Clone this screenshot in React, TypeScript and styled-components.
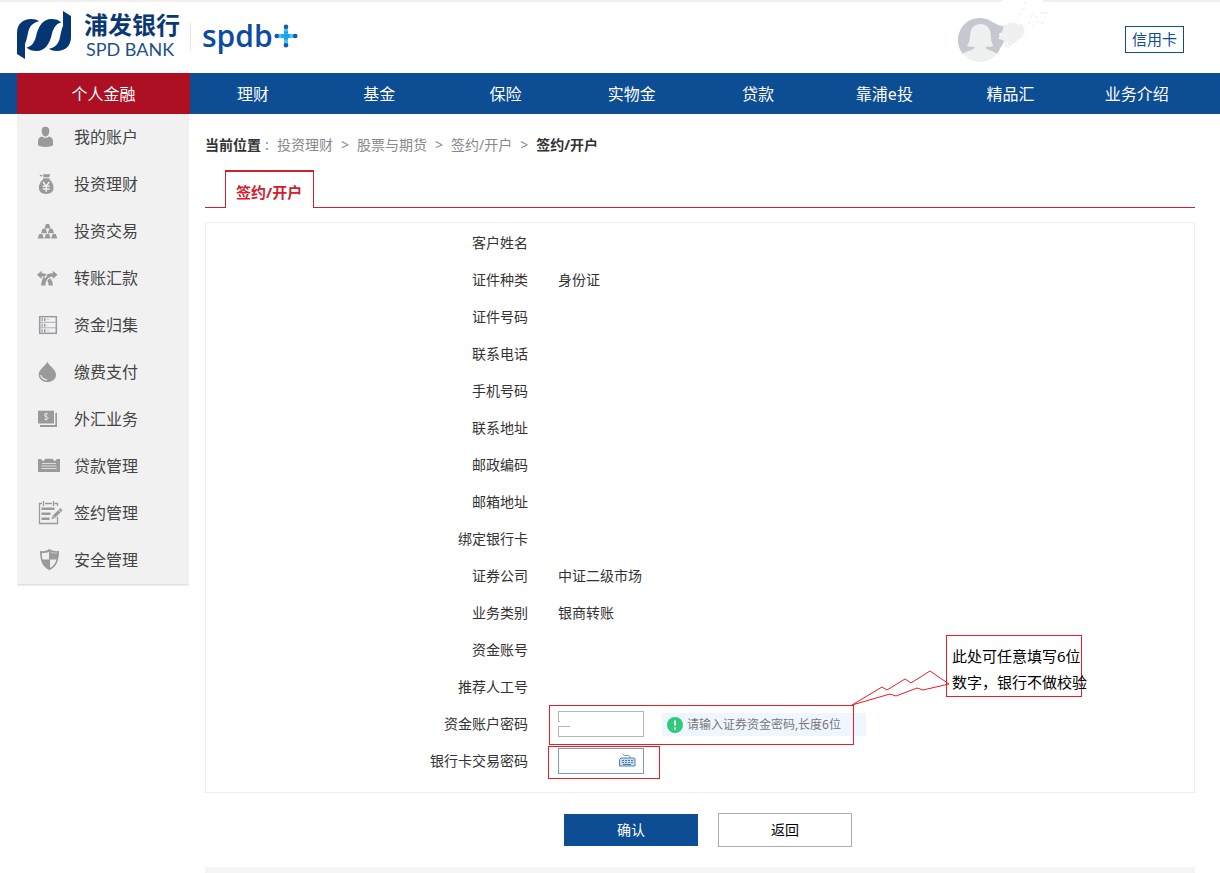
import React from "react";
import styled, { createGlobalStyle, css } from "styled-components";

const blue = "#0d4d94";
const red = "#d0202f";
const mark = "#ed1c24";
const iconGray = "#999b9b";

const GlobalStyle = createGlobalStyle`
  * { box-sizing: border-box; }
  body {
    margin: 0;
    background: #fff;
    color: #333;
    font: 14px/20px "Noto Sans", "Noto Sans CJK SC", sans-serif;
  }
  a { color: inherit; text-decoration: none; }
  svg { display: block; flex: none; }
`;

const Header = styled.header`
  display: flex;
  align-items: flex-start;
  height: 73px;
  padding: 0 36px 0 16px;
  border-top: 2px solid #f0f0f0;
`;

const Brand = styled.a`
  display: flex;
  align-items: center;
  padding-top: 9px;
  color: #0a3874;
`;

const BrandName = styled.span`
  display: flex;
  flex-direction: column;
  padding: 0 10px 0 12px;
`;

const BrandChinese = styled.span`
  font-size: 24px;
  line-height: 26px;
  font-weight: 700;
`;

const BrandLatin = styled.span`
  padding-left: 2px;
  font: 18px/22px Lato, sans-serif;
  color: #1f4f8c;
  white-space: nowrap;
`;

const SubBrand = styled.span`
  display: flex;
  align-items: center;
  gap: 1px;
  height: 29px;
  padding-left: 11px;
  border-left: 1px solid #e6e6e6;
  color: #0d4ca3;
  font: 600 30px/28px "Open Sans", sans-serif;
`;

const Tools = styled.div`
  display: flex;
  align-items: flex-start;
  gap: 75px;
  margin-left: auto;
  margin-top: -2px;
`;

const CardLink = styled.a`
  margin-top: 26px;
  padding: 0 6px;
  border: 1px solid ${blue};
  color: ${blue};
  font-size: 15px;
  line-height: 25px;
`;

const Nav = styled.nav`
  display: flex;
  height: 41px;
  padding: 0 20px 0 17px;
  background: ${blue};
`;

const NavLink = styled.a<{ $active?: boolean }>`
  flex: 1;
  padding-top: 2px;
  color: #fff;
  font-size: 16px;
  line-height: 39px;
  text-align: center;
  ${(p) =>
    p.$active &&
    css`
      flex: 0 0 173px;
      background: #ad1023;
    `}
`;

const Body = styled.div`
  display: flex;
  align-items: flex-start;
  gap: 16px;
  padding: 0 25px 0 17px;
`;

const Sidebar = styled.nav`
  flex: 0 0 172px;
  background: #f1f1f1;
  box-shadow: 0 1px 2px #d0d0d0;
  clip-path: inset(0 0 -4px 0);
`;

const SideLink = styled.a`
  display: flex;
  align-items: center;
  gap: 10px;
  height: 47px;
  padding: 0 0 2px 19px;
  color: #444;
  font-size: 16px;
`;

const Main = styled.main`
  flex: 1;
  min-width: 0;
`;

const Breadcrumb = styled.nav`
  display: flex;
  gap: 8px;
  padding-top: 21px;
  color: #888;
`;

const Place = styled.strong`
  color: #333;
`;

const Colon = styled.span`
  width: 4px;
  margin-left: -4px;
`;

const Tabs = styled.div`
  display: flex;
  height: 38px;
  margin-top: 15px;
  padding-left: 20px;
  border-bottom: 1px solid ${red};
`;

const Tab = styled.button`
  height: 38px;
  padding: 4px 11px 0 10px;
  border: 1px solid ${red};
  border-top-width: 2px;
  border-bottom: 0;
  background: #fff;
  color: ${red};
  font: inherit;
  font-size: 15px;
  font-weight: 700;
`;

const Panel = styled.div`
  margin-top: 14px;
  padding: 1px 0 13px;
  border: 1px solid #eee;
`;

const Row = styled.div`
  display: grid;
  grid-template-columns: 34% 1fr;
  align-items: center;
  height: 37px;
`;

const RowLabel = styled.label`
  padding-right: 14px;
  text-align: right;
  white-space: nowrap;
`;

const RowValue = styled.div`
  position: relative;
  display: flex;
  align-items: center;
  gap: 18px;
  height: 37px;
  margin-left: 16px;
`;

const PasswordInput = styled.input<{ $keyboard?: boolean }>`
  width: 86px;
  height: 26px;
  padding: 2px 4px;
  border: 1px solid ${(p) => (p.$keyboard ? "#8299b9" : "#b5b5b5")};
  background: #fff;
`;

const KeyboardIcon = styled.svg`
  position: absolute;
  left: 61px;
  top: 11px;
`;

const BorderScrape = styled.svg`
  position: absolute;
  left: 0;
  top: 15px;
`;

const Tip = styled.div`
  display: flex;
  align-items: center;
  gap: 4px;
  width: 204px;
  height: 23px;
  margin-top: 2px;
  padding-left: 5px;
  background: #f0f6ff;
  color: #777;
  font-size: 12px;
  white-space: nowrap;
`;

const Frame = styled.div<{ $x: number; $y: number; $w: number; $h: number }>`
  position: absolute;
  left: ${(p) => p.$x}px;
  top: ${(p) => p.$y}px;
  width: ${(p) => p.$w}px;
  height: ${(p) => p.$h}px;
  border: 1px solid ${mark};
  pointer-events: none;
`;

const Note = styled(Frame)`
  padding: 7px 0 0 5px;
  color: #000;
  font-size: 15px;
  line-height: 26px;
  white-space: nowrap;
`;

const Pointer = styled.svg`
  position: absolute;
  left: 292px;
  top: -36px;
  pointer-events: none;
`;

const Actions = styled.div`
  display: flex;
  justify-content: center;
  align-items: center;
  gap: 20px;
  height: 34px;
  margin: 20px 0;
  padding-left: 16px;
`;

const ActionButton = styled.button<{ $primary?: boolean }>`
  width: 134px;
  height: ${(p) => (p.$primary ? 32 : 34)}px;
  padding: 0;
  border: ${(p) => (p.$primary ? "0" : "1px solid #aaa")};
  background: ${(p) => (p.$primary ? blue : "#fff")};
  color: ${(p) => (p.$primary ? "#fff" : "#000")};
  font: inherit;
`;

const Footer = styled.footer`
  height: 6px;
  background: #f5f5f5;
`;

const SideIcon = ({ children }: { children: React.ReactNode }) => (
  <svg width="28" height="25" viewBox="0 0 28 25" fill={iconGray} aria-hidden="true">
    {children}
  </svg>
);

const gold = (x: number, y: number) => (
  <path key={`${x}-${y}`} d={`M${x + 1.2} ${y}h3.2l1.500 4.500h-6.200z`} />
);

const sideItems: { name: string; icon: React.ReactNode }[] = [
  {
    name: "我的账户",
    icon: (
      <>
        <path d="M9.5 2.700c2.800 0 4 1.900 3.800 4.700-.2 2.900-1.700 5.200-3.800 5.200s-3.600-2.300-3.800-5.200C5.500 4.600 6.700 2.700 9.500 2.700z" />
        <path d="M6 12.400c1.900 1.900 5.100 1.900 7 0 2.900.8 4 2.200 4 5.400v3.400c-2.500 2.300-12.500 2.300-15 0v-3.400c0-3.200 1.100-4.600 4-5.400z" />
      </>
    ),
  },
  {
    name: "投资理财",
    icon: (
      <>
        <path d="M7 3.300h7.500L13 6.300H7.500zM3.700 3.800l2.600.3-.3 1.500-2-.4zM7 7.200h6.500v1.300c2.400 1.800 4 5 4 8.300 0 4.300-3 6.200-7.300 6.200s-7.300-2-7.300-6.200c0-3.300 1.700-6.500 4.100-8.300z" />
        <path d="M7 11l3.200 4L13.400 11M6.800 15.300h6.800M6.800 18h6.800M10.200 15v6" stroke="#f1f1f1" strokeWidth="1.400" fill="none" />
      </>
    ),
  },
  {
    name: "投资交易",
    icon: <>{[gold(8.700, 5.900), gold(5.300, 10.800), gold(12.100, 10.800), gold(2, 15.900), gold(8.700, 15.900), gold(15.400, 15.900)]}</>,
  },
  {
    name: "转账汇款",
    icon: (
      <>
        <path d="M1 9.800l4.600-4.100v2.600h2.600c1.300.5 2.300 1.300 3 2.300L9.500 13C8.700 12 7.500 11.400 5.600 11.400v2.600zM21.500 9.800l-4.700-4.100v2.600C10 8.400 5.500 12 5.200 20.400h4.300c.1-5.600 2.700-8.700 7.300-8.900v2.600z" />
        <path d="M14 13.300c2 2 2.800 4.200 2.900 7.100h-4.300c0-1.800-.4-3.400-1.300-4.700.7-1 1.600-1.800 2.700-2.400z" />
      </>
    ),
  },
  {
    name: "资金归集",
    icon: (
      <>
        <rect x="3.700" y="4.700" width="16.600" height="16.600" fill="#f3f3f5" stroke={iconGray} strokeWidth="1.500" />
        <path d="M4 10.300h16M4 15.800h16" stroke="#a9afb9" />
        <path d="M5.500 6h1.300v3H5.500zM8 6h1.500v3H8zM5.500 11.800h1.300v3H5.500zM8 11.800h1.500v3H8zM5.500 17.200h1.300v3H5.500zM8 17.200h1.500v3H8z" />
        <path d="M10.500 7.500h3M10.500 13.300h1.500M10.500 18.700h3" stroke="#ccd" />
      </>
    ),
  },
  {
    name: "缴费支付",
    icon: (
      <>
        <path d="M11.300 2.700C12.500 6 20 10.500 20 15.400c0 4.800-3.900 7.600-8.600 7.600s-8.700-2.800-8.700-7.600c0-4.900 7.400-9.400 8.600-12.700z" />
        <path d="M4.800 16.500c.9 2.600 3 4 5.800 4.300" stroke="#eee" strokeWidth="1.200" fill="none" strokeLinecap="round" />
      </>
    ),
  },
  {
    name: "外汇业务",
    icon: (
      <>
        <path d="M19.300 6.700H21V21H4v-2h15.300z" />
        <path d="M2 4.700h16v12.800H2z" />
        <path d="M12.100 8.200c-.7-.8-3.900-.8-3.900.9 0 1.900 3.900 1.100 3.900 3 0 1.800-3.400 1.700-4 .7M10.100 6.500v8" stroke="#eee" strokeWidth=".8" fill="none" />
      </>
    ),
  },
  {
    name: "贷款管理",
    icon: (
      <>
        <path d="M2 6h3l2 2h1c.3-1.500 1-2.200 2-2.200h6c1 0 1.700.7 2 2.200h1l2-2h3v13H2z" />
        <path d="M6 10.500h14M5.500 13h15M5.500 15.500h15" stroke="#ddd" strokeWidth="1" />
      </>
    ),
  },
  {
    name: "签约管理",
    icon: (
      <>
        <path d="M6 3.500H3.500v20h18V17M9 3.500h7M18.500 3.500h3V6M7.500 1v5M17.500 1v5" stroke={iconGray} strokeWidth="1.300" fill="none" />
        <path d="M5.500 7.500h13v2.500h-13zM5.500 12.500h9v2.500h-9zM5.500 17.500h8v2.500h-8z" />
        <path d="M16.300 15.800l8-8 2.600 2.600-8 8-3.900 1.200z" stroke="#f1f1f1" strokeWidth=".5" />
        <path d="M22.200 9.700l3 3M25 7l2.500 2.700M17 15.700l2 2" stroke="#eef" strokeWidth=".8" />
      </>
    ),
  },
  {
    name: "安全管理",
    icon: (
      <>
        <path d="M13.500 2c3 2 6 2.400 9.500 2.100C23 13 21 20 13.500 23.200 6 20 4 13 4 4.100 7.500 4.400 10.500 4 13.500 2z" />
        <path d="M13 4.700v7.800H6.500c-.5-2-.7-4-.7-6.400 2.700.1 5-.3 7.200-1.400zM14 12.500h6.500c-1 4-3 6.700-6.500 8.500z" fill="#eee" />
        <path d="M14 4.700c2.200 1.100 4.500 1.500 7.200 1.400" stroke="#ddd" strokeWidth=".7" fill="none" />
      </>
    ),
  },
];

const navItems = ["理财", "基金", "保险", "实物金", "贷款", "靠浦e投", "精品汇", "业务介绍"];

const details: [string, string?][] = [
  ["客户姓名"],
  ["证件种类", "身份证"],
  ["证件号码"],
  ["联系电话"],
  ["手机号码"],
  ["联系地址"],
  ["邮政编码"],
  ["邮箱地址"],
  ["绑定银行卡"],
  ["证券公司", "中证二级市场"],
  ["业务类别", "银商转账"],
  ["资金账号"],
  ["推荐人工号"],
];

const BankLogo = () => (
  <svg width="56" height="50" viewBox="0 0 56 50" fill="#043673" aria-hidden="true">
    <path d="M1 43V22C1 13 7 8 15 8c3.500 0 6.300.8 8 2.200C17 11.500 13.500 15 12.200 21 11.200 25.500 10.500 30 9 33v15z" />
    <path d="M10.500 36.500C15.500 35.500 18.500 31.500 20 25.500 22.500 14.500 27 8 35.500 8c4 0 7.500 1 9.700 3.500C40.500 12.500 37.500 16.500 36 22.500 33.500 33.500 29 40 20.500 40c-4 0-7.700-1-10-3.500z" />
    <path d="M55 5v21c0 9-6 14-14 14-3.500 0-6.300-.8-8-2.200 6-1.300 9.500-4.800 10.800-10.800C44.800 22.500 45.500 18 47 15V0z" />
  </svg>
);

const PlusMark = () => (
  <svg width="24" height="26" viewBox="0 0 24 26" aria-hidden="true">
    <path d="M3 13h18M12 4v18" stroke="#4fc3f3" strokeWidth="4" />
    <path d="M7.500 13h9M12 8.500v9" stroke="#0aa2e8" strokeWidth="4" strokeDasharray="2 1" />
    <g fill="#155baf">
      <circle cx="2.700" cy="13" r="2.300" />
      <circle cx="21.300" cy="13" r="2.300" />
      <circle cx="12" cy="3.700" r="2.300" />
      <circle cx="12" cy="22.300" r="2.300" />
    </g>
  </svg>
);

const Avatar = () => (
  <svg width="100" height="70" viewBox="0 0 100 70" role="img" aria-label="用户头像">
    <path d="M50 2l4-2h39v3H50z" fill="#fff" />
    <path d="M94 0h6v2h-5z" fill="#eee" />
    <path d="M13 54A22 22 0 0 1 38 19.500l10 5.500 8 2-1 4-6 3 1 4 5 2-8 14z" fill="#c6c8d0" />
    <path d="M13 53.500c4-2.500 8-3 10.500-4.500 1-.8 1-2 .8-2.500-3 .5-6 .2-7.500-1 3-2.500 3-7.500 3.700-12.500C21 27.500 25 24 30.500 24s9.500 3.500 10 9c.5 5 .5 10 3 12.500-1.500 1.200-4.500 1.500-7.500 1-.2.500-.2 1.700.8 2.500C39.500 50.500 43 51 47 53.500 43 59 37 62 30 62s-13-3-17-8.500z" fill="#eff1f1" />
    <path d="M54 25l4-1 2-2 2 1h5l1 2 5-1v3l2 2-1 2 1 2-3 2 1 2-4 2-2 2-3 2-3 3-3-1v-2l-4-1-1-2-5-1 3-5 2-5z" fill="#eff0f0" />
    <path d="M53 44l4 4M55 43l4 5M79 16h3M82 14h2M85 17h3M90 13h2M92 13h6M78 23h3M86 22h3M91 23h3M87 36h1M82 26h2M69 14h3M71 9h4M74 3h3" stroke="#ececec" fill="none" />
  </svg>
);

export default function App() {
  return (
    <>
      <GlobalStyle />
      <Header>
        <Brand href="#" aria-label="浦发银行">
          <BankLogo />
          <BrandName>
            <BrandChinese>浦发银行</BrandChinese>
            <BrandLatin>SPD BANK</BrandLatin>
          </BrandName>
          <SubBrand>
            spdb
            <PlusMark />
          </SubBrand>
        </Brand>
        <Tools>
          <Avatar />
          <CardLink href="#">信用卡</CardLink>
        </Tools>
      </Header>
      <Nav>
        <NavLink href="#" $active>个人金融</NavLink>
        {navItems.map((name) => (
          <NavLink href="#" key={name}>{name}</NavLink>
        ))}
      </Nav>
      <Body>
        <Sidebar>
          {sideItems.map((item) => (
            <SideLink href="#" key={item.name}>
              <SideIcon>{item.icon}</SideIcon>
              {item.name}
            </SideLink>
          ))}
        </Sidebar>
        <Main>
          <Breadcrumb>
            <Place>当前位置</Place>
            <Colon>:</Colon>
            <a href="#">投资理财</a>
            <span>&gt;</span>
            <a href="#">股票与期货</a>
            <span>&gt;</span>
            <a href="#">签约/开户</a>
            <span>&gt;</span>
            <Place>签约/开户</Place>
          </Breadcrumb>
          <Tabs>
            <Tab type="button">签约/开户</Tab>
          </Tabs>
          <form onSubmit={(e) => e.preventDefault()}>
            <Panel>
              {details.map(([label, value]) => (
                <Row key={label}>
                  <RowLabel as="span">{label}</RowLabel>
                  <RowValue>{value}</RowValue>
                </Row>
              ))}
              <Row>
                <RowLabel htmlFor="fund-password">资金账户密码</RowLabel>
                <RowValue>
                  <PasswordInput id="fund-password" type="password" />
                  <BorderScrape width="14" height="8" viewBox="0 0 14 8" aria-hidden="true">
                    <path d="M.5 2v4" stroke="#fff" />
                    <path d="M1 1.500h1M0 6.500h12" stroke="#b5b5b5" />
                  </BorderScrape>
                  <Tip>
                    <svg width="16" height="16" viewBox="0 0 16 16" aria-hidden="true">
                      <circle cx="8" cy="8" r="8" fill="#2fcb7b" />
                      <path d="M8 3.500v5M8 10.500v2" stroke="#fff" strokeWidth="2" />
                    </svg>
                    请输入证券资金密码,长度6位
                  </Tip>
                  <Frame $x={-9} $y={0} $w={305} $h={40} />
                  <Note $x={388} $y={-70} $w={136} $h={62}>
                    此处可任意填写6位
                    <br />
                    数字，银行不做校验
                  </Note>
                  <Pointer width="102" height="38" viewBox="0 0 102 38" fill="none" stroke={mark} aria-hidden="true">
                    <path d="M2 36L32 18l5 3 18-11 6 4L80 2l19 13-26 6-6-2-21 8-6-2z" />
                  </Pointer>
                </RowValue>
              </Row>
              <Row>
                <RowLabel htmlFor="card-password">银行卡交易密码</RowLabel>
                <RowValue>
                  <PasswordInput id="card-password" type="password" $keyboard />
                  <KeyboardIcon width="17" height="15" viewBox="0 0 17 15" aria-hidden="true">
                    <path d="M3.500 1l2 1.500h4l2 1.500v1" stroke="#7b93b3" fill="none" />
                    <path d="M2 5h13l1 1v7H.5V6.500z" fill="#c9dff2" stroke="#5580b5" />
                    <path d="M3 7.500h11M3 9.500h11" stroke="#4676b4" strokeDasharray="2 1" />
                    <path d="M4 11.500h8" stroke="#4676b4" />
                  </KeyboardIcon>
                  <Frame $x={-10} $y={4} $w={112} $h={33} />
                </RowValue>
              </Row>
            </Panel>
            <Actions>
              <ActionButton type="submit" $primary>确认</ActionButton>
              <ActionButton type="button">返回</ActionButton>
            </Actions>
          </form>
          <Footer />
        </Main>
      </Body>
    </>
  );
}
